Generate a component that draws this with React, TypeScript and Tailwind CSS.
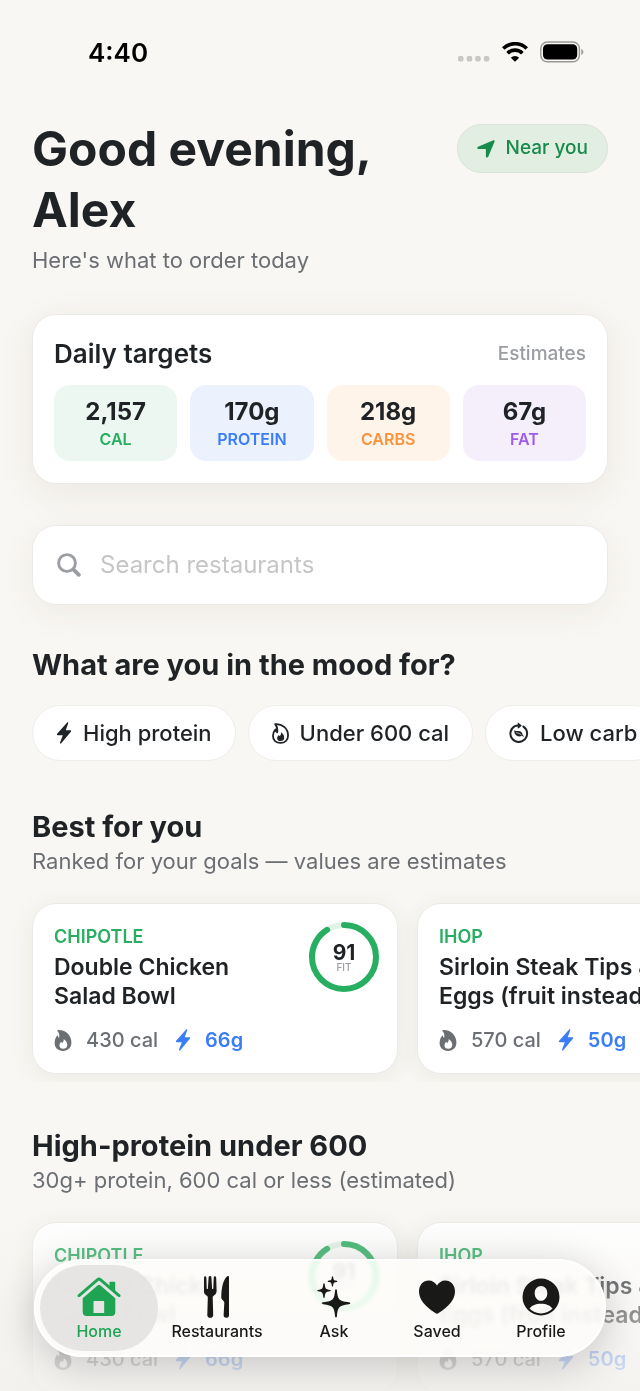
import React from 'react';

type IconProps = { className?: string };

const Bolt = ({ className }: IconProps) => (
  <svg viewBox="0 0 16 24" className={className} fill="currentColor" aria-hidden="true">
    <path d="M11.200.9c.6-.9 1.700-.5 1.300.6L9.900 9h4.900c.9 0 1.300.8.7 1.500L5 23.100c-.7.800-1.700.4-1.300-.7l3-8H1.200c-.9 0-1.300-.8-.7-1.500z" />
  </svg>
);

const Flame = ({ className }: IconProps) => (
  <svg viewBox="0 0 18 22" className={className} fill="currentColor" fillRule="evenodd" aria-hidden="true">
    <path d="M3.200.9C2.700.3 3 0 3.800 0 12.400-.2 17.800 6 17.800 13.100c0 5.300-3.500 8.800-8.800 8.800C3.700 21.900.2 18.500.2 13.700c0-3.100 1-5.700 2.600-7.600.4-.4.8-.3.9.2.2.9.6 1.600 1.200 2.100C5.500 5.500 4.900 2.900 3.200.9zM9.700 9.300c.3 2-.5 3.200-1.500 4.300-.4-.3-.7-.8-.9-1.300-1.300 1.100-2 2.500-2 3.900 0 2.100 1.600 3.500 3.900 3.500 2.600 0 4.300-1.500 4.300-4 0-2.700-1.600-5-3.800-6.400z" />
  </svg>
);

const FlameOutline = ({ className }: IconProps) => (
  <svg viewBox="0 0 18 22" className={className} aria-hidden="true">
    <path
      d="M3.300 1C11.500.6 17 6.200 17 13.100c0 4.800-3.200 7.900-8 7.900s-8-2.900-8-7.300c0-2.900 1-5.200 2.500-6.900.3 1.300 1 2.300 2 2.900C6 6.200 5.200 3.200 3.300 1z"
      fill="none"
      stroke="currentColor"
      strokeWidth="1.900"
      strokeLinejoin="round"
    />
    <path d="M9.600 9.700c.3 1.900-.4 3-1.300 3.900-.5-.2-.8-.6-1-1.100-1 1-1.900 2-1.900 3.500 0 1.900 1.500 3 3.600 3 2.400 0 3.900-1.300 3.900-3.500 0-2.400-1.400-4.500-3.300-5.800z" fill="currentColor" />
  </svg>
);

const LeafCycle = ({ className }: IconProps) => (
  <svg viewBox="0 0 22 23" className={className} aria-hidden="true">
    <path d="M15.800 4.400A9.200 9.200 0 1 1 6 4.200 8.700 8.700 0 0 1 11 3.300" fill="none" stroke="currentColor" strokeWidth="2.200" strokeLinecap="round" />
    <path d="M9.600.4c0-.4.400-.5.700-.3l3.400 2.800c.3.300.3.500 0 .8L10.300 6.500c-.3.2-.7.100-.7-.3z" fill="currentColor" />
    <path d="M5.800 8.600c1.100.9 2.600.5 4.300.6 3.300.2 4.600 1.700 4.700 3.900l1.300 1.600c.4.600-.3 1.100-.8.600l-1-.9c-3.200 2-8.900.6-8.500-5.800z" fill="currentColor" />
    <path d="M8.200 11.200c2 .2 3.700.9 5.200 2.300" fill="none" stroke="#fff" strokeWidth=".7" strokeLinecap="round" />
  </svg>
);

const LocationArrow = ({ className }: IconProps) => (
  <svg viewBox="0 0 18 18" className={className} fill="currentColor" aria-hidden="true">
    <path d="M16.400.3c.9-.4 1.500.2 1.200 1.100L11.200 16.800c-.6 1.300-2.300 1-2.300-.5V9.700c0-.4-.2-.6-.6-.6H1.600C.1 9.100-.2 7.400 1.100 6.800z" />
  </svg>
);

const SearchIcon = ({ className }: IconProps) => (
  <svg viewBox="0 0 24 24" className={className} fill="none" stroke="currentColor" strokeLinecap="round" aria-hidden="true">
    <circle cx="10" cy="10" r="8.400" strokeWidth="2.900" />
    <path d="M16.600 16.600l5.200 5.200" strokeWidth="3.900" />
  </svg>
);

const HomeIcon = ({ className }: IconProps) => (
  <svg viewBox="0 0 44 40" className={className} fill="currentColor" aria-hidden="true">
    <path d="M20 1.200c1.300-1.100 2.700-1.100 4 0L43 17.500c1.500 1.400-.2 3.400-1.900 2.200L23 4.200c-.6-.5-1.400-.5-2 0L3 19.700c-1.700 1.200-3.500-.8-1.900-2.200z" />
    <path d="M33.500 4.700h3.700c.6 0 1 .4 1 1v8.600l-5.700-4.900V5.700c0-.6.400-1 1-1z" />
    <path fillRule="evenodd" d="M20.800 8.300c.8-.7 1.600-.7 2.400 0l15.100 13v13.900c0 2.300-1.500 3.700-3.800 3.700h-25c-2.300 0-3.800-1.400-3.800-3.700V21.300zM17.500 24c-.7 0-1 .3-1 1v11h10.700V25c0-.7-.3-1-1-1z" />
  </svg>
);

const ForkKnife = ({ className }: IconProps) => (
  <svg viewBox="0 0 26 42" className={className} fill="currentColor" aria-hidden="true">
    <path d="M0 2C0-.2 2.300-.2 2.400 2l.3 10.500c0 .8 1.200.8 1.200 0L4.600 1.600c.1-2 2.700-2 2.800 0l.7 10.900c0 .8 1.200.8 1.200 0L9.700 2c.1-2.200 2.400-2.200 2.500 0l.4 12.500c.1 3-1.300 4.200-2.900 5.200-.8.5-1 1-1 1.900l.5 17.500c.1 3.500-6 3.500-5.900 0l.5-17.500c0-.9-.2-1.400-1-1.900C1.100 18.700-.4 17.500 0 14.500z" />
    <path d="M25 1.500v37.700c0 3.500-5.500 3.500-5.400 0L20.300 27c0-1.100-.2-1.700-1-2.300-1.800-1.300-2.200-2-2-4.700C17.600 11.600 19 4.400 22.700.7 23.700-.4 25-.1 25 1.500z" />
  </svg>
);

const Sparkles = ({ className }: IconProps) => (
  <svg viewBox="0 0 36 42" className={className} fill="currentColor" aria-hidden="true">
    <path d="M20 13.200c.5 0 .8.300.9 1 .9 8.800 1.500 10.900 11.900 12.100.9.1 1.500.5 1.500 1s-.6.900-1.500 1c-10.400 1.200-11 3.300-11.900 12.100-.1.700-.4 1-.9 1s-.8-.3-.9-1c-.9-8.800-1.500-10.900-11.900-12.100-.9-.1-1.500-.5-1.500-1s.6-.9 1.500-1c10.400-1.200 11-3.300 11.900-12.100.1-.7.400-1 .9-1z" />
    <path d="M8 7.300c.4 0 .6.200.7.700.5 4.600.9 5.200 5.300 5.900.5.100.8.300.8.700s-.3.600-.8.700c-4.400.7-4.800 1.300-5.300 5.900-.1.500-.3.700-.7.700s-.6-.2-.7-.7c-.5-4.600-.9-5.200-5.300-5.900-.5-.1-.8-.3-.8-.7s.3-.6.800-.7c4.400-.7 4.800-1.300 5.300-5.900.1-.5.300-.7.700-.7zM16.500.2c.3 0 .5.200.6.600.4 3.200.6 3.600 3.600 4 .4.100.6.300.6.600s-.2.500-.6.600c-3 .4-3.200.8-3.600 4-.1.400-.3.600-.6.600s-.5-.2-.6-.6c-.4-3.200-.6-3.600-3.600-4-.4-.1-.6-.3-.6-.6s.2-.5.600-.6c3-.4 3.200-.8 3.600-4 .1-.4.300-.6.600-.6z" />
  </svg>
);

const Heart = ({ className }: IconProps) => (
  <svg viewBox="0 0 36 34" className={className} fill="currentColor" aria-hidden="true">
    <path d="M18 33.700c-.6 0-1.300-.4-2-.9C6.500 26.700 0 20 0 11.600 0 4.900 4.200.4 9.700.4c3.600 0 6.600 2 8.300 5.200C19.700 2.400 22.700.4 26.300.4 31.800.4 36 4.900 36 11.600c0 8.400-6.500 15.100-16 21.200-.7.500-1.400.9-2 .9z" />
  </svg>
);

const ProfileIcon = ({ className }: IconProps) => (
  <svg viewBox="0 0 38 38" className={className} fill="currentColor" fillRule="evenodd" aria-hidden="true">
    <path d="M19 .5a18.500 18.500 0 1 1 0 37 18.500 18.500 0 0 1 0-37zM19 8c-3.700 0-6.300 3.100-6.300 7.200 0 4.200 2.700 7.600 6.300 7.600s6.300-3.400 6.300-7.600C25.300 11.100 22.700 8 19 8zM7.500 30.600C10.400 33.700 14.400 35.400 19 35.400s8.600-1.700 11.500-4.800c-1.800-2.800-6-4.900-11.500-4.900s-9.700 2.100-11.500 4.900z" />
  </svg>
);

const FitRing = ({ score }: { score: number }) => {
  const length = 2 * Math.PI * 32;
  return (
    <svg viewBox="0 0 70 70" className="size-[70px] shrink-0" role="img" aria-label={`${score} fit`}>
      <circle cx="35" cy="35" r="32" fill="none" stroke="#dff3e6" strokeWidth="6" />
      <circle
        cx="35"
        cy="35"
        r="32"
        fill="none"
        stroke="#27ae60"
        strokeWidth="6"
        strokeLinecap="round"
        strokeDasharray={`${(length * score) / 100} ${length}`}
        transform="rotate(-90 35 35)"
      />
      <text x="35" y="38" textAnchor="middle" fontSize="21" fontWeight="700" fill="#1f2326">{score}</text>
      <text x="35" y="49" textAnchor="middle" fontSize="10" fontWeight="500" fill="#9a9da1">FIT</text>
    </svg>
  );
};

const targets = [
  { value: '2,157', label: 'CAL', box: 'bg-[#edf7f1]', text: 'text-[#27ae60]' },
  { value: '170g', label: 'PROTEIN', box: 'bg-[#ebf2fe]', text: 'text-[#3b7df6]' },
  { value: '218g', label: 'CARBS', box: 'bg-[#fef4ea]', text: 'text-[#fb923c]' },
  { value: '67g', label: 'FAT', box: 'bg-[#f5effc]', text: 'text-[#9f5cea]' },
];

const moods = [
  { label: 'High protein', icon: <Bolt className="h-[22px] w-4" /> },
  { label: 'Under 600 cal', icon: <FlameOutline className="h-[21px] w-[17px]" /> },
  { label: 'Low carb', icon: <LeafCycle className="h-[22px] w-5" /> },
];

const meals = [
  { place: 'CHIPOTLE', name: 'Double Chicken Salad Bowl', calories: 430, protein: 66, score: 91 },
  { place: 'IHOP', name: 'Sirloin Steak Tips & Eggs (fruit instead of pancakes)', calories: 570, protein: 50, score: 88 },
];

const sections = [
  { title: 'Best for you', note: 'Ranked for your goals — values are estimates' },
  { title: 'High-protein under 600', note: '30g+ protein, 600 cal or less (estimated)' },
];

const tabs = [
  { label: 'Home', icon: <HomeIcon className="h-10 w-11" /> },
  { label: 'Restaurants', icon: <ForkKnife className="h-[42px] w-[26px]" /> },
  { label: 'Ask', icon: <Sparkles className="h-[42px] w-9" /> },
  { label: 'Saved', icon: <Heart className="h-[34px] w-9" /> },
  { label: 'Profile', icon: <ProfileIcon className="size-[38px]" /> },
];

const StatusBar = () => (
  <div className="flex h-[104px] items-center justify-between pr-14 pl-[88px] text-black">
    <span className="text-[26px] font-semibold">4:40</span>
    <div className="flex items-center gap-3">
      <svg viewBox="0 0 32 20" className="h-5 w-8" fill="#c9c7c3" aria-hidden="true">
        <rect x="0" y="14" width="5.500" height="5.500" rx="1.800" />
        <rect x="8.700" y="14" width="5.500" height="5.500" rx="1.800" />
        <rect x="17.200" y="14" width="5.500" height="5.500" rx="1.800" />
        <rect x="25.800" y="14" width="5.500" height="5.500" rx="1.800" />
      </svg>
      <svg viewBox="0 0 26 20" className="h-5 w-[26px]" aria-hidden="true">
        <path d="M1.300 6.500a16.800 16.800 0 0 1 23.400 0M5.600 11.200a10.600 10.600 0 0 1 14.800 0" fill="none" stroke="#000" strokeWidth="3.700" />
        <path d="M13 19.800l-4.100-4.100a5.800 5.800 0 0 1 8.200 0z" />
      </svg>
      <svg viewBox="0 0 44 22" className="h-[22px] w-11" aria-hidden="true">
        <rect x=".8" y="1" width="38.600" height="19.800" rx="6.500" fill="none" stroke="#999" strokeWidth="1.400" />
        <rect x="3" y="3.200" width="34.200" height="15.400" rx="4.600" />
        <path d="M41.300 8v6c1.300-.5 2-1.600 2-3s-.7-2.500-2-3z" fill="#999" />
      </svg>
    </div>
  </div>
);

const MealSection = ({ title, note }: { title: string; note: string }) => (
  <section className="mt-[46px]">
    <div className="px-8">
      <h2 className="text-[29px] leading-9 font-bold">{title}</h2>
      <p className="text-[22px] leading-8 text-[#6b6f74]">{note}</p>
    </div>
    <div className="mt-[10px] flex gap-[19px] overflow-x-auto px-8 pt-4 pb-2 [scrollbar-width:none]">
      {meals.map((meal) => (
        <article
          key={meal.place}
          className="w-[366px] shrink-0 rounded-3xl border border-[#eceae6] bg-white p-[18px] pb-5 shadow-[0_4px_24px_rgba(60,50,30,0.07)]"
        >
          <div className="flex items-start justify-between">
            <div className="w-[230px] pt-1 pl-[3px]">
              <p className="text-[18px] leading-[22px] font-semibold text-[#27ae60]">{meal.place}</p>
              <h3 className="mt-[5px] line-clamp-2 text-[23px] leading-[29px] font-semibold">{meal.name}</h3>
            </div>
            <FitRing score={meal.score} />
          </div>
          <div className="mt-4 flex items-center pl-[3px] text-xl leading-[26px] font-medium text-[#6b6f74]">
            <Flame className="mr-[14px] h-[21px] w-[18px]" />
            <span className="mr-[17px]">{meal.calories} cal</span>
            <Bolt className="mr-[14px] h-[22px] w-4 text-[#3b7df6]" />
            <span className="font-semibold text-[#3b7df6]">{meal.protein}g</span>
          </div>
        </article>
      ))}
    </div>
  </section>
);

const TabBar = () => (
  <nav className="absolute inset-x-[34px] bottom-[34px] grid h-[98px] grid-cols-[118fr_118fr_116fr_90fr_118fr] rounded-full border-2 border-white bg-[#fdfcf9]/88 p-1 shadow-[0_8px_40px_rgba(0,0,0,0.2)] backdrop-blur-[2px] backdrop-saturate-200">
    {tabs.map((tab, index) => (
      <a
        key={tab.label}
        href={`#${tab.label.toLowerCase()}`}
        aria-current={index === 0 ? 'page' : undefined}
        className={
          index === 0
            ? 'flex flex-col items-center rounded-full bg-[#e3e2e0]/85 pt-[11px] text-[#1ea453]'
            : 'flex flex-col items-center pt-[11px] text-[#191917]'
        }
      >
        <span className="flex h-[42px] items-center">{tab.icon}</span>
        <span className="mt-[3px] text-[16px] leading-5 font-medium">{tab.label}</span>
      </a>
    ))}
  </nav>
);

const App = () => {
  return (
    <div className="relative h-screen overflow-hidden bg-[#f9f7f3] font-['Inter',sans-serif] text-[#1f2326]">
      <main className="h-full overflow-y-auto [scrollbar-width:none]">
        <StatusBar />

        <header className="mt-[14px] flex items-start justify-between gap-4 px-8">
          <div>
            <h1 className="text-[48px] leading-[61px] font-bold">Good evening, Alex</h1>
            <p className="mt-1 text-[22px] leading-8 text-[#6b6f74]">Here's what to order today</p>
          </div>
          <button
            type="button"
            className="mt-[6px] flex h-[49px] shrink-0 items-center gap-[11px] rounded-full border border-[#d9e3d8] bg-[#e1eee1] px-[19px] text-[19px] font-medium text-[#178a4c]"
          >
            <LocationArrow className="size-[18px]" />
            Near you
          </button>
        </header>

        <section className="mx-8 mt-[38px] rounded-3xl border border-[#eceae6] bg-white px-[21px] pt-[21px] pb-[22px] shadow-[0_8px_36px_rgba(60,50,30,0.08)]">
          <div className="flex items-center justify-between">
            <h2 className="text-[26px] leading-9 font-semibold">Daily targets</h2>
            <span className="text-[19px] font-medium text-[#9a9da1]">Estimates</span>
          </div>
          <div className="mt-[13px] grid grid-cols-4 gap-[13px]">
            {targets.map((target) => (
              <div key={target.label} className={`flex h-[76px] flex-col items-center rounded-2xl pt-3 ${target.box}`}>
                <span className="text-[24px] leading-[30px] font-bold">{target.value}</span>
                <span className={`text-[16px] leading-6 font-semibold ${target.text}`}>{target.label}</span>
              </div>
            ))}
          </div>
        </section>

        <label className="mx-8 mt-[41px] flex h-[80px] items-center gap-[19px] rounded-3xl border border-[#eceae6] bg-white px-6 shadow-[0_8px_36px_rgba(60,50,30,0.06)]">
          <SearchIcon className="size-6 shrink-0 text-[#9a9da1]" />
          <input
            type="search"
            aria-label="Search restaurants"
            placeholder="Search restaurants"
            className="w-full bg-transparent text-[24px] outline-none placeholder:text-[#c6c6c8]"
          />
        </label>

        <section className="mt-[42px]">
          <h2 className="px-8 text-[29px] leading-9 font-bold">What are you in the mood for?</h2>
          <div className="mt-[22px] flex gap-3 overflow-x-auto px-8 pb-[2px] [scrollbar-width:none]">
            {moods.map((mood) => (
              <button
                key={mood.label}
                type="button"
                className="flex h-14 shrink-0 items-center gap-[11px] rounded-full border border-[#efede9] bg-white px-[23px] text-[22px] font-medium"
              >
                {mood.icon}
                {mood.label}
              </button>
            ))}
          </div>
        </section>

        {sections.map((section) => (
          <MealSection key={section.title} title={section.title} note={section.note} />
        ))}
      </main>

      <div className="pointer-events-none absolute inset-x-0 bottom-0 h-[190px] bg-linear-to-b from-[#f6f4f1]/0 to-[#f3f1ee]/90" />
      <TabBar />
    </div>
  );
};

export default App;
